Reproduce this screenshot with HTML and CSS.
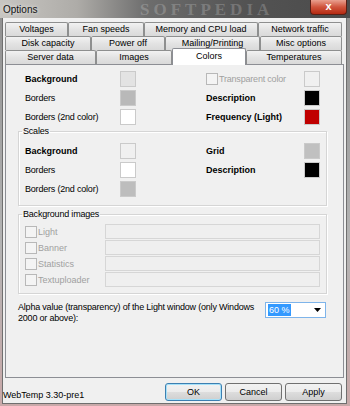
FILE: index.html
```html
<!DOCTYPE html>
<html lang="en">
<head>
  <meta charset="UTF-8">
  <title>Options</title>
  <link rel="stylesheet" href="styles.css">
</head>
<body>

  <div class="window">
    <div class="titlebar">
      <span class="title">Options</span>
      <span class="watermark">SOFTPEDIA</span>
      <span class="close">x</span>
    </div>

    <div class="client">
      <div class="tabs">
        <div class="tab-row">
          <div class="tab" style="width:63px">Voltages</div>
          <div class="tab" style="width:76px">Fan speeds</div>
          <div class="tab" style="width:114px">Memory and CPU load</div>
          <div class="tab" style="width:84px">Network traffic</div>
        </div>
        <div class="tab-row">
          <div class="tab" style="width:86px">Disk capacity</div>
          <div class="tab" style="width:74px">Power off</div>
          <div class="tab" style="width:95px">Mailing/Printing</div>
          <div class="tab" style="width:82px">Misc options</div>
        </div>
        <div class="tab-row">
          <div class="tab" style="width:91px">Server data</div>
          <div class="tab" style="width:76px">Images</div>
          <div class="tab selected" style="width:74px">Colors</div>
          <div class="tab" style="width:96px">Temperatures</div>
        </div>
      </div>

      <div class="panel">
        <div class="colors top">
          <span class="bold">Background</span>
          <span class="swatch" style="background:#e3e3e3"></span>
          <span></span>
          <span class="check-label"><span class="checkbox"></span>Transparent color</span>
          <span class="swatch" style="background:#f0f0f0"></span>

          <span>Borders</span>
          <span class="swatch" style="background:#b9b9b9"></span>
          <span></span>
          <span class="bold">Description</span>
          <span class="swatch" style="background:#000"></span>

          <span>Borders (2nd color)</span>
          <span class="swatch" style="background:#fff"></span>
          <span></span>
          <span class="bold">Frequency (Light)</span>
          <span class="swatch" style="background:#c00000"></span>
        </div>

        <fieldset class="group scales">
          <legend>Scales</legend>
          <div class="colors">
            <span class="bold">Background</span>
            <span class="swatch" style="background:#f0f0f0"></span>
            <span></span>
            <span class="bold">Grid</span>
            <span class="swatch" style="background:#c0c0c0"></span>

            <span>Borders</span>
            <span class="swatch" style="background:#fff"></span>
            <span></span>
            <span class="bold">Description</span>
            <span class="swatch" style="background:#000"></span>

            <span>Borders (2nd color)</span>
            <span class="swatch" style="background:#bdbdbd"></span>
          </div>
        </fieldset>

        <fieldset class="group images">
          <legend>Background images</legend>
          <div class="image-row"><span class="check-label"><span class="checkbox"></span>Light</span><span class="field"></span></div>
          <div class="image-row"><span class="check-label"><span class="checkbox"></span>Banner</span><span class="field"></span></div>
          <div class="image-row"><span class="check-label"><span class="checkbox"></span>Statistics</span><span class="field"></span></div>
          <div class="image-row"><span class="check-label"><span class="checkbox"></span>Textuploader</span><span class="field"></span></div>
        </fieldset>

        <div class="alpha">
          <p>Alpha value (transparency) of the Light window (only Windows 2000 or above):</p>
          <div class="combo">
            <span class="combo-value">60 %</span>
            <svg width="7" height="4" viewBox="0 0 7 4"><path d="M0 0h7L3.5 4z" fill="#000"/></svg>
          </div>
        </div>
      </div>

      <div class="footer">
        <span class="version">WebTemp 3.30-pre1</span>
        <div class="buttons">
          <button class="default">OK</button>
          <button>Cancel</button>
          <button>Apply</button>
        </div>
      </div>
    </div>
  </div>

</body>
</html>
```

FILE: styles.css
```css
body {
  margin: 0;
  width: 350px;
  height: 406px;
  overflow: hidden;
  font-family: 'Liberation Sans', Arial, sans-serif;
  font-size: 9px;
  color: #000;
  background: #7a7a7a;
}

.window {
  height: 406px;
  display: flex;
  flex-direction: column;
  background: linear-gradient(to bottom, #8f8f8f, #b4b4b4 60%, #c9a9a9);
}

.titlebar {
  height: 18px;
  flex: none;
  display: flex;
  align-items: center;
  position: relative;
  overflow: hidden;
  background: linear-gradient(to right, #c8c6c2 0, #aeaca8 22%, #6d6d6d 42%, #535353 70%, #4b4b4b 100%);
}

.title {
  margin-left: 3px;
  font-size: 10px;
  color: #111;
  text-shadow: 0 0 4px rgba(255, 255, 255, 0.8);
}

.watermark {
  position: absolute;
  left: 140px;
  top: 1px;
  font-family: 'Liberation Serif', serif;
  font-weight: bold;
  font-size: 17px;
  line-height: 17px;
  letter-spacing: 4px;
  color: rgba(255, 255, 255, 0.2);
}

.close {
  position: absolute;
  right: 3px;
  top: 0;
  width: 37px;
  height: 15px;
  box-sizing: border-box;
  border: 1px solid #5a1e14;
  border-top: none;
  border-radius: 0 0 4px 4px;
  background: linear-gradient(to bottom, #e9a08f, #d0543c 50%, #b52a12);
  color: #fff;
  font-weight: bold;
  font-size: 11px;
  text-align: center;
  line-height: 12px;
}

.client {
  flex: 1;
  margin: 0 4px 3px 3px;
  padding-top: 4px;
  display: flex;
  flex-direction: column;
  background: #f0f0f0;
  box-shadow: 0 0 0 1px #6f6f6f;
}

.tabs {
  margin-left: 2px;
  flex: none;
}

.tab-row {
  display: flex;
  height: 14px;
}

.tab {
  box-sizing: border-box;
  height: 14px;
  border: 1px solid #8e8f8f;
  border-bottom: none;
  border-radius: 2px 2px 0 0;
  background: linear-gradient(to bottom, #f2f2f2, #e3e3e3 50%, #d9d9d9);
  text-align: center;
  line-height: 13px;
  white-space: nowrap;
}

.tab.selected {
  position: relative;
  z-index: 1;
  height: 17px;
  margin-top: -2px;
  margin-bottom: -1px;
  background: #fff;
  border-color: #8c8e94;
  line-height: 15px;
}

.panel {
  flex: 1;
  margin-right: 2px;
  margin-left: 2px;
  padding: 6px 0 0 12px;
  border: 1px solid #8c8e94;
  background: #f0f0f0;
}

.colors {
  display: grid;
  grid-template-columns: 95px 16px 70px 98px 16px;
  grid-auto-rows: 16px;
  row-gap: 3px;
  align-items: center;
  letter-spacing: -0.2px;
}

.colors.top {
  margin-left: 7px;
}

.bold {
  font-weight: bold;
  letter-spacing: 0;
}

.swatch {
  width: 16px;
  height: 16px;
  box-sizing: border-box;
  border: 1px solid #cacaca;
}

.check-label {
  display: flex;
  align-items: center;
  color: #a0a0a0;
  white-space: nowrap;
}

.checkbox {
  width: 12px;
  height: 12px;
  box-sizing: border-box;
  margin-right: 1px;
  border: 1px solid #b8b8b8;
  background: #f4f4f4;
}

.group {
  width: 309px;
  box-sizing: border-box;
  margin: 1px 0 0;
  padding: 6px 0 8px 6px;
  border: 1px solid #d5d5d5;
  box-shadow: inset 1px 1px 0 #fff, 1px 1px 0 #fff;
}

.group legend {
  padding: 0 1px;
  margin-left: -3px;
  line-height: 11px;
  letter-spacing: -0.2px;
}

.images {
  margin-top: 3px;
  padding: 4px 0 6px 6px;
  display: flex;
  flex-direction: column;
  gap: 1px;
}

.image-row {
  display: flex;
  align-items: center;
  height: 15px;
}

.image-row .check-label {
  width: 80px;
}

.field {
  width: 215px;
  height: 15px;
  box-sizing: border-box;
  border: 1px solid #d6d6d6;
  background: #efefef;
}

.alpha {
  margin-top: 8px;
  display: flex;
  align-items: flex-start;
}

.alpha p {
  width: 240px;
  margin: 0;
  line-height: 11px;
  letter-spacing: -0.2px;
}

.combo {
  margin-left: 7px;
  width: 61px;
  height: 16px;
  box-sizing: border-box;
  border: 1px solid #7eb4ea;
  background: #fff;
  display: flex;
  align-items: center;
  justify-content: space-between;
  padding: 0 4px 0 2px;
}

.combo-value {
  background: #3399ff;
  color: #fff;
  padding: 0 1px;
  line-height: 12px;
}

.footer {
  flex: none;
  height: 25px;
  display: flex;
  align-items: flex-end;
  justify-content: space-between;
  padding: 0 4px 2px 0;
  box-sizing: border-box;
}

.version {
  font-size: 9px;
  line-height: 11px;
}

.buttons {
  display: flex;
  gap: 3px;
}

button {
  width: 57px;
  height: 18px;
  padding: 0;
  font-family: inherit;
  font-size: 9px;
  border: 1px solid #707070;
  border-radius: 3px;
  background: linear-gradient(to bottom, #f2f2f2, #ebebeb 50%, #dddddd 51%, #cfcfcf);
}

button.default {
  border-color: #3c7fb1;
  box-shadow: inset 0 0 0 1px #a6e1f9;
}
```
